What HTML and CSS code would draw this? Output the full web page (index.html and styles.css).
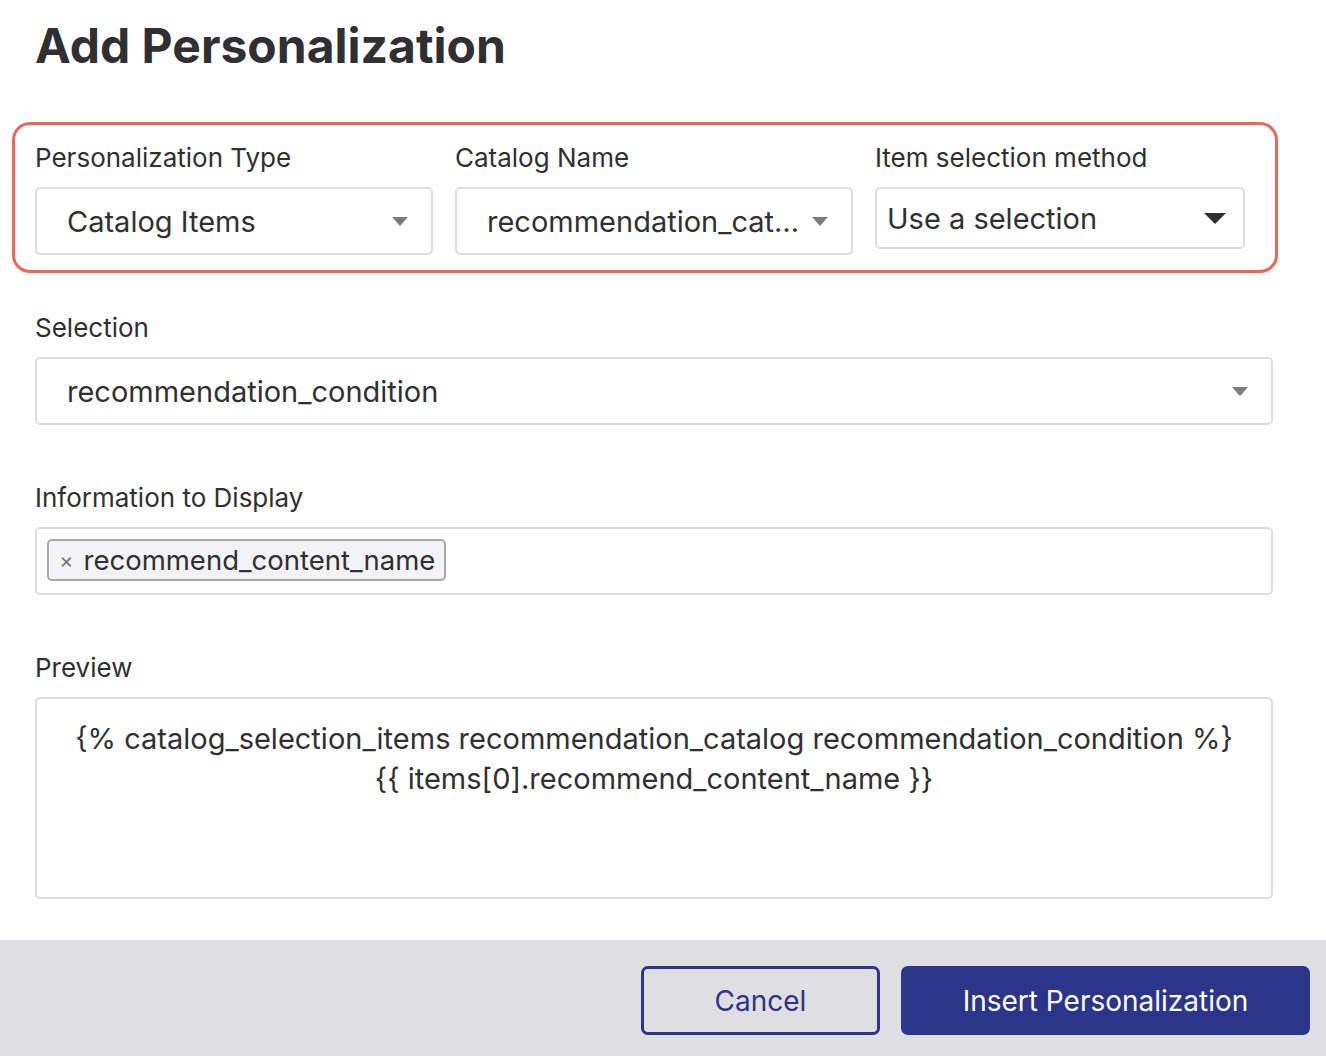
FILE: index.html
```html
<!DOCTYPE html>
<html lang="en">
<head>
  <meta charset="UTF-8">
  <title>Add Personalization</title>
  <link rel="stylesheet" href="styles.css">
</head>
<body>
  <div class="modal">
    <div class="modal-body">
      <h1 class="title">Add Personalization</h1>

      <!-- Highlighted top row -->
      <div class="highlight">
        <div class="row">
          <div class="field">
            <label class="label">Personalization Type</label>
            <div class="select">
              <span class="select-value">Catalog Items</span>
              <span class="caret"></span>
            </div>
          </div>
          <div class="field">
            <label class="label">Catalog Name</label>
            <div class="select">
              <span class="select-value" title="recommendation_catalog">recommendation_cat&hellip;</span>
              <span class="caret"></span>
            </div>
          </div>
          <div class="field">
            <label class="label">Item selection method</label>
            <div class="select select-native">
              <span class="select-value">Use a selection</span>
              <span class="caret caret-dark"></span>
            </div>
          </div>
        </div>
      </div>

      <div class="group">
        <label class="label">Selection</label>
        <div class="select">
          <span class="select-value">recommendation_condition</span>
          <span class="caret"></span>
        </div>
      </div>

      <div class="group">
        <label class="label">Information to Display</label>
        <div class="tags">
          <span class="tag"><span class="tag-x">&times;</span>recommend_content_name</span>
        </div>
      </div>

      <div class="group">
        <label class="label">Preview</label>
        <div class="preview">
          {% catalog_selection_items recommendation_catalog recommendation_condition %}<br>
          {{ items[0].recommend_content_name }}
        </div>
      </div>
    </div>

    <!-- Footer -->
    <div class="footer">
      <button class="btn btn-outline">Cancel</button>
      <button class="btn btn-primary">Insert Personalization</button>
    </div>
  </div>
</body>
</html>
```
FILE: styles.css
```css
/* Base */
* {
  margin: 0;
  padding: 0;
  box-sizing: border-box;
}

body {
  font-family: Inter, "Noto Sans", sans-serif;
  background-color: #fff;
  color: #303033;
}

.modal-body {
  padding: 0 53px 0 35px;
}

.title {
  font-size: 48px;
  line-height: 64px;
  font-weight: 700;
  padding-top: 14px;
  margin-bottom: 44px;
}

/* Highlight box round the first row */
.highlight {
  margin: 0 -5px 0 -23px;
  padding: 17px 0 15px 20px;
  border: 3px solid #e8695a;
  border-radius: 18px;
}

.row {
  display: grid;
  grid-template-columns: 398px 398px 370px;
  gap: 22px;
}

.label {
  display: block;
  font-size: 26px;
  line-height: 32px;
  margin-bottom: 13px;
}

/* Selects */
.select {
  display: flex;
  align-items: center;
  height: 68px;
  padding: 0 23px 0 30px;
  border: 2px solid #dfdfe3;
  border-radius: 5px;
  font-size: 29px;
}

.select-value {
  flex: 1;
  white-space: nowrap;
  padding-right: 12px;
}

.caret {
  width: 0;
  height: 0;
  border-left: 8px solid transparent;
  border-right: 8px solid transparent;
  border-top: 9px solid #7b7b7e;
}

.select-native {
  height: 62px;
  padding: 0 17px 0 10px;
}

.caret-dark {
  border-left-width: 11px;
  border-right-width: 11px;
  border-top: 11px solid #2e2e30;
}

.group {
  margin-top: 39px;
}

.group + .group {
  margin-top: 57px;
}

/* Tag input */
.tags {
  height: 68px;
  padding: 10px 10px;
  border: 2px solid #dfdfe3;
  border-radius: 5px;
}

.tag {
  display: inline-flex;
  align-items: center;
  height: 42px;
  padding: 0 9px 0 10px;
  background-color: #f3f3f5;
  border: 2px solid #a9a9ad;
  border-radius: 5px;
  font-size: 27.5px;
}

.tag-x {
  color: #7b7b7e;
  font-size: 22px;
  margin-right: 10px;
}

/* Preview */
.preview {
  height: 202px;
  padding: 20px 20px;
  border: 2px solid #dfdfe3;
  border-radius: 5px;
  text-align: center;
  font-size: 29px;
  line-height: 40px;
}

/* Footer */
.footer {
  display: flex;
  justify-content: flex-end;
  gap: 21px;
  margin-top: 41px;
  height: 116px;
  padding: 26px 16px 0 0;
  background-color: #dfdee3;
}

.btn {
  height: 69px;
  border-radius: 7px;
  font-family: Inter, "Noto Sans", sans-serif;
  font-size: 28px;
  cursor: pointer;
}

.btn-outline {
  width: 239px;
  background-color: transparent;
  border: 3px solid #2b3589;
  color: #2b3589;
}

.btn-primary {
  width: 409px;
  background-color: #2b3589;
  border: none;
  color: #fff;
}
```
